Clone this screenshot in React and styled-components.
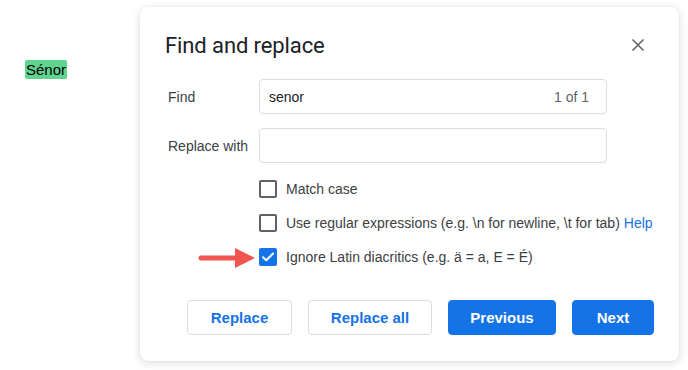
import React from 'react';
import styled, { createGlobalStyle } from 'styled-components';

const GlobalStyle = createGlobalStyle`
  html, body {
    margin: 0;
    padding: 0;
    background: #fff;
  }
  body {
    font-family: 'Liberation Sans', Arial, sans-serif;
  }
`;

const Page = styled.div`
  display: flex;
  width: 688px;
  height: 370px;
  overflow: hidden;
`;

const DocArea = styled.div`
  width: 140px;
  flex-shrink: 0;
  padding: 60px 0 0 25px;
  box-sizing: border-box;
`;

const Highlight = styled.span`
  display: inline-block;
  background: #5fd48e;
  color: #000;
  font-size: 15px;
  line-height: 19px;
  padding: 0 1px;
  border-radius: 2px;
`;

const Dialog = styled.div`
  margin-top: 7px;
  width: 539px;
  height: 354px;
  box-sizing: border-box;
  background: #fff;
  border-radius: 8px;
  box-shadow: 0 2px 10px rgba(0, 0, 0, 0.14), 0 0 2px rgba(0, 0, 0, 0.06);
  padding: 19px 25px 0 25px;
  display: flex;
  flex-direction: column;
`;

const Header = styled.div`
  display: flex;
  align-items: center;
  justify-content: space-between;
  height: 38px;
`;

const Title = styled.h2`
  margin: 0;
  font-family: Roboto, 'Liberation Sans', sans-serif;
  font-weight: 400;
  font-size: 22px;
  color: #202124;
  letter-spacing: -0.1px;
`;

const CloseButton = styled.button`
  border: none;
  background: none;
  padding: 0;
  margin-right: 9px;
  width: 14px;
  height: 14px;
  display: flex;
  cursor: pointer;
`;

const Form = styled.div`
  margin-top: 15px;
  padding-left: 3px;
  display: flex;
  flex-direction: column;
  gap: 14px;
`;

const Row = styled.div`
  display: flex;
  align-items: center;
`;

const Label = styled.label`
  width: 91px;
  flex-shrink: 0;
  font-size: 14px;
  color: #3c4043;
`;

const InputBox = styled.div`
  width: 348px;
  height: 35px;
  box-sizing: border-box;
  border: 1px solid #dadce0;
  border-radius: 4px;
  display: flex;
  align-items: center;
  padding: 0 17px 0 9px;
  font-size: 14px;
  color: #202124;
`;

const InputText = styled.span`
  flex: 1;
`;

const Count = styled.span`
  color: #5f6368;
  font-size: 14px;
`;

const Options = styled.div`
  margin-top: 17px;
  padding-left: 94px;
  display: flex;
  flex-direction: column;
  gap: 16px;
`;

const Option = styled.div`
  position: relative;
  display: flex;
  align-items: center;
  gap: 9px;
  font-size: 14px;
  color: #3c4043;
  height: 18px;
`;

const Box = styled.span`
  width: 18px;
  height: 18px;
  box-sizing: border-box;
  border-radius: 2px;
  border: 2px solid ${({ checked }) => (checked ? '#1473e6' : '#5f6368')};
  background: ${({ checked }) => (checked ? '#1473e6' : '#fff')};
  display: flex;
  align-items: center;
  justify-content: center;
  flex-shrink: 0;
`;

const HelpLink = styled.a`
  color: #1473e6;
  text-decoration: none;
  margin-left: 4px;
`;

const Pointer = styled.svg`
  position: absolute;
  left: -61px;
  top: -1px;
`;

const Buttons = styled.div`
  margin-top: 34px;
  padding-left: 22px;
  display: flex;
  gap: 16px;
`;

const Button = styled.button`
  height: 35px;
  width: ${({ w }) => w}px;
  box-sizing: border-box;
  border-radius: 4px;
  font-family: 'Liberation Sans', Arial, sans-serif;
  font-weight: 700;
  font-size: 15px;
  cursor: pointer;
  border: 1px solid ${({ primary }) => (primary ? '#1473e6' : '#dadce0')};
  background: ${({ primary }) => (primary ? '#1473e6' : '#fff')};
  color: ${({ primary }) => (primary ? '#fff' : '#1473e6')};
`;

const Check = () => (
  <svg width="12" height="10" viewBox="0 0 12 10">
    <path d="M1 5.2 L4.3 8.3 L11 1.5" fill="none" stroke="#fff" strokeWidth="2" strokeLinecap="round" strokeLinejoin="round" />
  </svg>
);

export default function App() {
  return (
    <Page>
      <GlobalStyle />
      <DocArea>
        <Highlight>Sénor</Highlight>
      </DocArea>
      <Dialog>
        <Header>
          <Title>Find and replace</Title>
          <CloseButton aria-label="Close">
            <svg width="14" height="14" viewBox="0 0 14 14">
              <path d="M1.5 1.5 L12.5 12.5 M12.5 1.5 L1.5 12.5" stroke="#5f6368" strokeWidth="1.6" />
            </svg>
          </CloseButton>
        </Header>
        <Form>
          <Row>
            <Label>Find</Label>
            <InputBox>
              <InputText>senor</InputText>
              <Count>1 of 1</Count>
            </InputBox>
          </Row>
          <Row>
            <Label>Replace with</Label>
            <InputBox />
          </Row>
        </Form>
        <Options>
          <Option>
            <Box />
            Match case
          </Option>
          <Option>
            <Box />
            <span>
              Use regular expressions (e.g. \n for newline, \t for tab)
              <HelpLink href="#">Help</HelpLink>
            </span>
          </Option>
          <Option>
            <Pointer width="58" height="22" viewBox="0 0 58 22">
              <path d="M3 11 L40 11" stroke="#f2544f" strokeWidth="5" strokeLinecap="round" />
              <path d="M37 1 L57 11 L37 21 Z" fill="#f2544f" />
            </Pointer>
            <Box checked>
              <Check />
            </Box>
            Ignore Latin diacritics (e.g. ä = a, E = É)
          </Option>
        </Options>
        <Buttons>
          <Button w={105}>Replace</Button>
          <Button w={124}>Replace all</Button>
          <Button primary w={108}>Previous</Button>
          <Button primary w={82}>Next</Button>
        </Buttons>
      </Dialog>
    </Page>
  );
}
